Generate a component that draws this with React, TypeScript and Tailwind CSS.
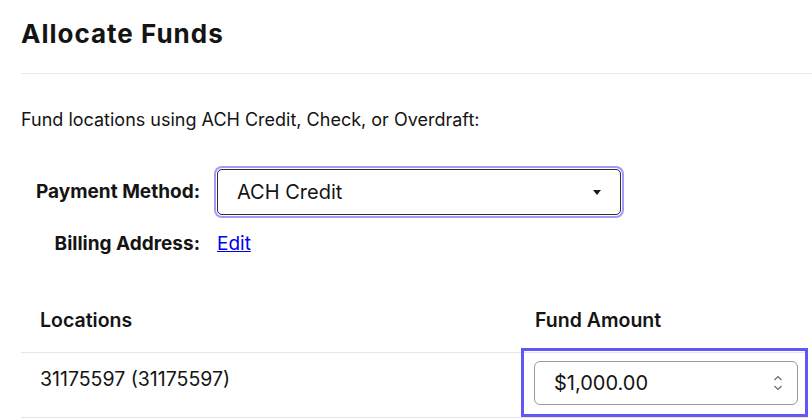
import React from "react";

const font = { fontFamily: "Inter, 'Noto Sans', sans-serif" };

function SelectArrow() {
  return (
    <svg width="8" height="5" viewBox="0 0 8 5" className="text-[#1a1a1a]">
      <path d="M0 0 H8 L4 5 Z" fill="currentColor" />
    </svg>
  );
}

function Spinner() {
  return (
    <svg width="10" height="20" viewBox="0 0 10 20" fill="none" stroke="#6b6b6b" strokeWidth="1.2">
      <path d="M1.5 7 L5 3.5 L8.5 7" />
      <path d="M1.5 13 L5 16.5 L8.5 13" />
    </svg>
  );
}

export default function App() {
  return (
    <div className="min-h-screen bg-white text-[#141414]" style={font}>
      {/* header */}
      <div className="pl-[21px]">
        <h1 className="pt-[18px] pb-[23px] text-[26px] leading-[32px] font-bold tracking-[1px] border-b border-[#e8e8e8]">
          Allocate Funds
        </h1>
      </div>

      <div className="pl-[21px] pr-[4px]">
        <p className="mt-[34px] text-[18px] leading-[24px]">
          Fund locations using ACH Credit, Check, or Overdraft:
        </p>

        {/* payment method */}
        <div className="mt-[37px] flex items-center">
          <div className="w-[179px] text-right text-[19px] font-bold leading-[26px]">Payment Method:</div>
          <div className="ml-[17px] w-[404px] h-[46px] rounded-[5px] border-[1.5px] border-[#2e2b3d] ring-2 ring-[#a09cf8] ring-offset-1 flex items-center justify-between pl-[19px] pr-[19px]">
            <span className="text-[20px]">ACH Credit</span>
            <SelectArrow />
          </div>
        </div>

        <div className="mt-[17px] flex items-center">
          <div className="w-[179px] text-right text-[19px] font-bold leading-[24px]">Billing Address:</div>
          <a href="#" className="ml-[17px] text-[19px] leading-[24px] text-[#0000ee] underline">
            Edit
          </a>
        </div>

        {/* table */}
        <div className="mt-[51px] w-[787px]">
          <div className="flex text-[19.5px] font-semibold leading-[26px] pb-[19px] border-b border-[#e6e6e6]">
            <div className="flex-1 pl-[19px]">Locations</div>
            <div className="w-[287px] pl-[14px]">Fund Amount</div>
          </div>
          <div className="flex h-[65px] items-start border-b border-[#e6e6e6]">
            <div className="flex-1 pl-[19px] pt-[13px] text-[19.5px] leading-[26px]">31175597 (31175597)</div>
            <div className="relative w-[287px] h-full pl-[13px] pr-[10px] pt-[8px]">
              <div className="absolute -top-[5px] bottom-0 left-0 right-0 border-[3px] border-[#6157f5]" />
              <div className="h-[44px] rounded-[6px] border border-[#9a9a9a] flex items-center justify-between pl-[19px] pr-[14px]">
                <span className="text-[20px]">$1,000.00</span>
                <Spinner />
              </div>
            </div>
          </div>
        </div>
      </div>
    </div>
  );
}
